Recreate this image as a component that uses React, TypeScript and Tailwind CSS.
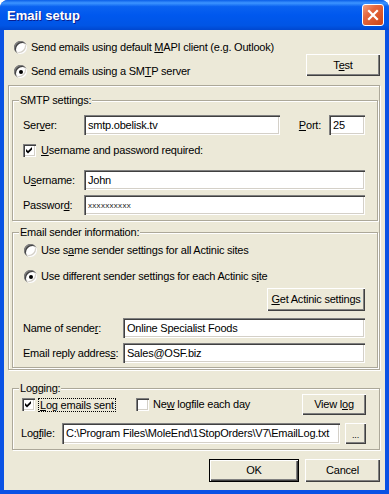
import React from "react";

const sunken =
  "shadow-[inset_1px_1px_0_#808080,inset_2px_2px_0_#404040,inset_-1px_-1px_0_#ffffff,inset_-2px_-2px_0_#D4D0C8]";

function Radio({ checked }: { checked?: boolean }) {
  return (
    <span
      className={`relative inline-flex w-[13px] h-[13px] shrink-0 rounded-full bg-white items-center justify-center ${sunken}`}
    >
      {checked && <span className="w-[4px] h-[4px] rounded-full bg-black" />}
    </span>
  );
}

function Check({ checked }: { checked?: boolean }) {
  return (
    <span className={`relative inline-flex w-[13px] h-[13px] shrink-0 bg-white ${sunken}`}>
      {checked && (
        <svg width="13" height="13" viewBox="0 0 13 13" className="absolute left-0 top-0">
          <polygon points="3,5 5,7 9,3 9,5.5 5,9.5 3,7.5" fill="#000" />
        </svg>
      )}
    </span>
  );
}

function Input({ value, className = "", small }: { value: string; className?: string; small?: boolean }) {
  return (
    <div
      className={`h-[20px] bg-white flex items-center pl-[4px] overflow-hidden whitespace-nowrap ${sunken} ${className}`}
    >
      {small ? <span className="text-[8px] text-[#202020] tracking-[0.3px]">{value}</span> : value}
    </div>
  );
}

function Btn({ children, className = "", def }: { children: React.ReactNode; className?: string; def?: boolean }) {
  const inner = (
    <div
      className={`h-full w-full flex items-center justify-center bg-[#ECE9D8] shadow-[inset_1px_1px_0_#ffffff,inset_-1px_-1px_0_#404040,inset_-2px_-2px_0_#808080]`}
    >
      {children}
    </div>
  );
  if (def) return <div className={`border border-black ${className}`}>{inner}</div>;
  return <div className={className}>{inner}</div>;
}

function Group({
  label,
  className = "",
  children,
}: {
  label?: string;
  className?: string;
  children: React.ReactNode;
}) {
  return (
    <div
      className={`relative border border-[#ACA899] shadow-[inset_1px_1px_0_#ffffff,1px_1px_0_#ffffff] ${className}`}
    >
      {label && (
        <span className="absolute -top-[7px] left-[6px] bg-[#ECE9D8] px-[1px] leading-[13px]">
          {label}
        </span>
      )}
      {children}
    </div>
  );
}

export default function App() {
  return (
    <div className="w-[389px] h-[494px] flex flex-col bg-[#0A52E4] rounded-t-[8px] overflow-hidden font-['Liberation_Sans',Arial,sans-serif] text-[11px] leading-[13px] tracking-[-0.22px] text-black">
      {/* Title bar */}
      <div className="h-[30px] shrink-0 flex items-center pl-[7px] pr-[5px] bg-[linear-gradient(to_bottom,#0A5EE8_0%,#3D95FF_10%,#0A62F0_22%,#0058EE_50%,#0055E5_85%,#0047CF_100%)]">
        <span className="text-white font-bold text-[13px] tracking-[0px] [text-shadow:1px_1px_0_#0A1F8F]">
          Email setup
        </span>
        <div className="ml-auto w-[22px] h-[22px] rounded-[3px] border border-white bg-[linear-gradient(135deg,#F4A07E_0%,#E5683F_35%,#CF4515_100%)] flex items-center justify-center">
          <svg width="12" height="12" viewBox="0 0 12 12">
            <path d="M2 2 L10 10 M10 2 L2 10" stroke="#fff" strokeWidth="2.2" strokeLinecap="square" />
          </svg>
        </div>
      </div>

      {/* Body */}
      <div className="flex-1 mx-[4px] mb-[4px] bg-[#ECE9D8] flex flex-col">
        {/* Top radios */}
        <div className="flex mt-[11px] pl-[10px] pr-[5px]">
          <div className="flex flex-col gap-[11px]">
            <div className="flex items-center gap-[4px] h-[13px]">
              <Radio />
              <span>
                Send emails using default <u>M</u>API client (e.g. Outlook)
              </span>
            </div>
            <div className="flex items-center gap-[4px] h-[13px]">
              <Radio checked />
              <span>
                Send emails using a SM<u>T</u>P server
              </span>
            </div>
          </div>
          <Btn className="ml-auto mt-[13px] w-[74px] h-[22px]">
            <span>
              T<u>e</u>st
            </span>
          </Btn>
        </div>

        {/* Outer box */}
        <Group className="mt-[7px] ml-[4px] w-[372px] pl-[3px] pb-[1px]">
          <Group label="SMTP settings:" className="mt-[14px] w-[366px] pl-[10px] pr-[12px] pb-[5px]">
            <div className="flex items-center mt-[14px] h-[20px]">
              <span className="w-[61px]">
                Ser<u>v</u>er:
              </span>
              <Input value="smtp.obelisk.tv" className="w-[196px]" />
              <span className="ml-auto">
                <u>P</u>ort:
              </span>
              <Input value="25" className="ml-[8px] w-[36px]" />
            </div>
            <div className="flex items-center gap-[5px] mt-[9px] h-[13px]">
              <Check checked />
              <span>
                <u>U</u>sername and password required:
              </span>
            </div>
            <div className="flex items-center mt-[13px] h-[20px]">
              <span className="w-[61px]">
                U<u>s</u>ername:
              </span>
              <Input value="John" className="flex-1" />
            </div>
            <div className="flex items-center mt-[5px] h-[20px]">
              <span className="w-[61px]">
                Passwor<u>d</u>:
              </span>
              <Input value="xxxxxxxxxx" small className="flex-1" />
            </div>
          </Group>

          <Group label="Email sender information:" className="mt-[11px] w-[366px] pl-[10px] pr-[12px] pb-[4px]">
            <div className="flex items-center gap-[4px] mt-[11px] ml-[1px] h-[13px]">
              <Radio />
              <span>
                Use s<u>a</u>me sender settings for all Actinic sites
              </span>
            </div>
            <div className="flex items-center gap-[4px] mt-[13px] ml-[1px] h-[13px]">
              <Radio checked />
              <span>
                Use different sender settings for each Actinic s<u>i</u>te
              </span>
            </div>
            <div className="flex justify-end mt-[5px]">
              <Btn className="w-[98px] h-[23px]">
                <span>
                  <u>G</u>et Actinic settings
                </span>
              </Btn>
            </div>
            <div className="flex items-center mt-[7px] h-[20px]">
              <span className="w-[100px]">
                Name of sende<u>r</u>:
              </span>
              <Input value="Online Specialist Foods" className="flex-1" />
            </div>
            <div className="flex items-center mt-[5px] h-[20px]">
              <span className="w-[100px]">
                Email reply addres<u>s</u>:
              </span>
              <Input value="Sales@OSF.biz" className="flex-1" />
            </div>
          </Group>
        </Group>

        {/* Logging */}
        <Group label="Logging:" className="mt-[18px] ml-[8px] w-[368px] pl-[9px] pr-[13px] pb-[5px]">
          <div className="flex items-center mt-[5px] h-[21px]">
            <div className="flex items-center w-[114px]">
              <Check checked />
              <span className="ml-[3px] border border-dotted border-black px-[1px] leading-[12px]">
                <u>L</u>og emails sent
              </span>
            </div>
            <Check />
            <span className="ml-[4px]">
              Ne<u>w</u> logfile each day
            </span>
            <Btn className="ml-auto w-[64px] h-[21px]">
              <span>
                View l<u>o</u>g
              </span>
            </Btn>
          </div>
          <div className="flex items-center mt-[8px] h-[21px]">
            <span className="w-[41px] -ml-[1px]">
              Log<u>f</u>ile:
            </span>
            <Input value="C:\Program Files\MoleEnd\1StopOrders\V7\EmailLog.txt" className="w-[278px] h-[21px]" />
            <Btn className="ml-[5px] w-[21px] h-[21px]">
              <span className="text-[9px] leading-[9px] pt-[3px]">...</span>
            </Btn>
          </div>
        </Group>

        {/* Buttons */}
        <div className="flex justify-end gap-[6px] mt-[9px] pr-[5px]">
          <Btn def className="w-[90px] h-[23px]">
            OK
          </Btn>
          <Btn className="w-[75px] h-[23px]">Cancel</Btn>
        </div>
      </div>
    </div>
  );
}
